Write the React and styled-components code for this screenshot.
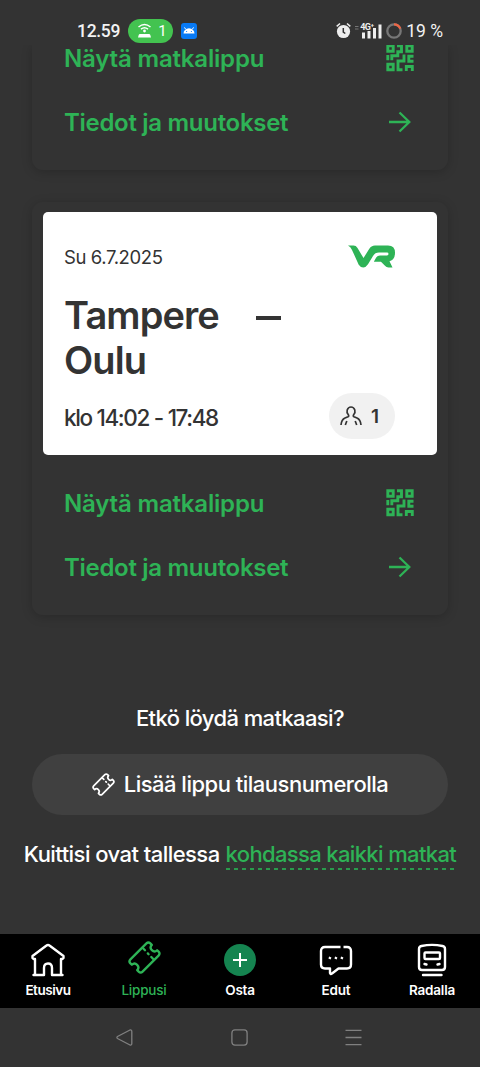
import React from "react";
import styled, { createGlobalStyle } from "styled-components";

const GREEN = "#2eb356";

const GlobalStyle = createGlobalStyle`
  *, *::before, *::after { box-sizing: border-box; }
  html, body { margin: 0; background: #333333; }
  body { font-family: Inter, "Liberation Sans", sans-serif; -webkit-font-smoothing: antialiased; }
`;

const Screen = styled.main`
  width: 480px;
  height: 1067px;
  display: flex;
  flex-direction: column;
  overflow: hidden;
  background: #333333;
  color: #fff;
`;

const StatusBar = styled.header`
  flex: none;
  height: 45px;
  padding: 18px 37px 0 77px;
  display: flex;
  justify-content: space-between;
  background: #333333;
  font-family: Roboto, sans-serif;
  z-index: 1;
`;

const StatusGroup = styled.div`
  display: flex;
  align-items: center;
  height: 25px;
  gap: ${(p) => p.$gap};
`;

const StatusText = styled.span`
  font-size: 17.5px;
  line-height: 25px;
  padding-top: 2px;
  font-weight: ${(p) => p.$weight || 500};
  letter-spacing: ${(p) => p.$track || "0"};
  color: #f2f2f2;
  white-space: nowrap;
`;

const HotspotPill = styled.span`
  display: flex;
  align-items: center;
  gap: 6px;
  width: 45px;
  height: 24px;
  padding-left: 9px;
  border-radius: 12px;
  background: #43c350;
  font-size: 15px;
`;

const Content = styled.section`
  flex: 1;
  min-height: 0;
  overflow: hidden;
  padding: 0 32px;
`;

const Card = styled.article`
  height: ${(p) => p.$height};
  padding: ${(p) => p.$pad};
  margin-bottom: 32px;
  border-radius: ${(p) => (p.$clipped ? "0 0 11px 11px" : "11px")};
  box-shadow: 0 2px 11px rgba(0, 0, 0, 0.2);
  display: flex;
  flex-direction: column;
  justify-content: flex-end;
`;

const Ticket = styled.div`
  flex: none;
  height: 243px;
  padding: 33px 42px 0 21px;
  border-radius: 5px;
  background: #fff;
  color: #333333;
`;

const TicketRow = styled.div`
  display: flex;
  justify-content: space-between;
`;

const TravelDate = styled.span`
  font-size: 18.5px;
  line-height: 25px;
  letter-spacing: -0.4px;
`;

const Route = styled.h2`
  margin: 23px 0 10px;
  font-size: 38px;
  line-height: 45px;
  font-weight: 600;
  letter-spacing: -0.9px;
`;

const RouteStart = styled.div`
  display: flex;
  align-items: center;
  gap: 37px;
`;

const Dash = styled.span`
  width: 25px;
  height: 4px;
  margin-top: 4px;
  background: #333333;
`;

const TravelTime = styled.span`
  font-size: 22.5px;
  line-height: 46px;
  font-weight: 500;
  letter-spacing: -1.4px;
  word-spacing: 0.3px;
  padding-top: 2px;
  height: 46px;
`;

const Passengers = styled.span`
  display: flex;
  align-items: center;
  gap: 9px;
  width: 66px;
  height: 46px;
  padding-left: 11px;
  border-radius: 23px;
  background: #f1f1f1;
  font-size: 19px;
  font-weight: 600;
`;

const Actions = styled.div`
  flex: none;
  padding: ${(p) => p.$pad};
`;

const Action = styled.a`
  display: flex;
  align-items: center;
  justify-content: space-between;
  height: 64px;
  color: ${GREEN};
  font-size: 24px;
  font-weight: 600;
  letter-spacing: ${(p) => p.$track};
`;

const Help = styled.p`
  margin: 0;
  padding-top: 57px;
  line-height: 29px;
  font-size: 22px;
  font-weight: 500;
  letter-spacing: -0.6px;
  text-align: center;
`;

const AddButton = styled.button`
  display: flex;
  align-items: center;
  justify-content: center;
  gap: 9px;
  width: 416px;
  height: 61px;
  margin-top: 21px;
  padding: 0 0 1px;
  border: 0;
  border-radius: 31px;
  background: #404040;
  color: #fff;
  font: 500 22px Inter, sans-serif;
  letter-spacing: -0.5px;
`;

const Receipts = styled.p`
  margin: 25px -20px 0;
  display: flex;
  justify-content: center;
  gap: 6px;
  font-size: 22px;
  line-height: 28px;
  font-weight: 500;
  letter-spacing: -0.55px;
  white-space: nowrap;
`;

const ReceiptLink = styled.a`
  height: 30px;
  letter-spacing: -0.64px;
  color: ${GREEN};
  background: repeating-linear-gradient(90deg, #2a9a4c 0 4px, transparent 4px 8px) bottom / 100% 2px no-repeat;
`;

const TabBar = styled.nav`
  flex: none;
  height: 74px;
  display: grid;
  grid-template-columns: repeat(5, 1fr);
  background: #000;
`;

const Tab = styled.a`
  display: flex;
  flex-direction: column;
  align-items: center;
  padding-top: 8px;
  color: ${(p) => (p.$active ? GREEN : "#fff")};
  font-size: 13.5px;
  line-height: 20px;
  font-weight: ${(p) => (p.$active ? 500 : 600)};
  letter-spacing: ${(p) => p.$track || "-0.2px"};
`;

const TabIcon = styled.span`
  display: flex;
  justify-content: center;
  height: 38px;
  margin-top: ${(p) => (p.$raised ? "-1px" : "0")};
  margin-bottom: ${(p) => (p.$raised ? "1px" : "0")};
`;

const SystemNav = styled.footer`
  flex: none;
  height: 59px;
  display: flex;
  justify-content: center;
  align-items: center;
  gap: 97.500px;
  padding-right: 2px;
`;

const HotspotIcon = () => (
  <svg width="15" height="16" viewBox="0 0 15 16" fill="none" stroke="#fff" strokeWidth="1.5">
    <path d="M1.5 4Q7.5-.8 13.500 4M4 6.200Q7.500 3.400 11 6.200" />
    <circle cx="7.5" cy="8" r="1.4" fill="#fff" stroke="none" />
    <path d="M3 11h9q1 0 1.300 1l.7 2.600H1L1.700 12Q2 11 3 11Z" fill="#fff" stroke="none" />
  </svg>
);

const AndroidIcon = () => (
  <svg width="16" height="16" viewBox="0 0 16 16">
    <rect width="16" height="16" rx="3" fill="#087af5" />
    <path d="M2.500 10.500a5.500 5.300 0 0 1 11 0Z" fill="#fff" />
    <path d="M4.500 6 3.500 4.400M11.500 6l1-1.600" stroke="#fff" />
    <circle cx="5.600" cy="8.500" r=".6" fill="#087af5" />
    <circle cx="10.400" cy="8.500" r=".6" fill="#087af5" />
  </svg>
);

const AlarmIcon = () => (
  <svg width="15" height="17" viewBox="0 0 15 17" fill="none">
    <circle cx="7.500" cy="9.500" r="6.600" fill="#eee" />
    <path d="M.7 4.400 4 1.500M14.300 4.400 11 1.500" stroke="#eee" strokeWidth="1.500" />
    <path d="M7.300 6v4l2 1.500" stroke="#333" strokeWidth="1.500" />
  </svg>
);

const NetworkLabel = styled.span`
  position: absolute;
  top: -1px;
  left: 5px;
  font-size: 9px;
  line-height: 10px;
  font-weight: 700;
  letter-spacing: -0.5px;
  color: #eee;
`;

const Network = styled.span`
  position: relative;
  display: flex;
  width: 27px;
  height: 16px;
`;

const SignalIcon = () => (
  <Network>
    <svg width="27" height="16" viewBox="0 0 27 16">
      <path d="M0 3.500h3.500M0 6h3.500" stroke="#777" strokeWidth="1" />
      <path d="M8.500 9.500v6M14 8v7.500M19.500 5v10.500M25 1.500v14" stroke="#eee" strokeWidth="3" />
    </svg>
    <NetworkLabel>4G⁺</NetworkLabel>
  </Network>
);

const BatteryIcon = () => (
  <svg width="16" height="16" viewBox="0 0 16 16" fill="none" strokeWidth="2.300">
    <circle cx="8" cy="8" r="6.700" stroke="#777" />
    <path d="M8 1.300A6.700 6.700 0 0 1 14.300 5.700" stroke="#ee6746" />
  </svg>
);

const CodeIcon = () => (
  <svg width="28" height="28" viewBox="0 0 28 28" fill="none" stroke="currentColor" strokeWidth="2.900">
    <path d="M1.800 1.800h5.400v5.400H1.800ZM20.800 1.800h5.400v5.400h-5.400ZM1.800 20.300h5.400v5.400H1.800ZM11 1.800h4.500v6h-3.700v3.900H5.800v4.600M1.800 11v5.300M18 10.500V17h-6v8.700h4.500M27.500 12.300h-4.700v5h4.700M20.300 27v-4.500h6V27" />
  </svg>
);

const ArrowIcon = () => (
  <svg width="28" height="24" viewBox="0 0 28 24" fill="none" stroke="currentColor" strokeWidth="2.300">
    <path d="M3 12h20.500M13.500 2.500 23.300 12l-9.800 9.500" />
  </svg>
);

const VrLogo = () => (
  <svg width="47" height="23" viewBox="0 0 47 22" preserveAspectRatio="none">
    <path fill="#2eb356" d="M0 .5H5.500Q8 .5 9.500 2.800L15.500 12.500 21 4Q23.200.5 27 .5H40q7 0 7 7 0 6.500-5.500 8L44.500 21.500H40.500q-2.200 0-3.500-1.700L33 16H25.800l2.400-4q1.300-2 3.800-2h7q1.500 0 1.500-1.400T39 7.200H31q-4 0-6 3.300l-5 8Q18 21.500 15.300 21.500T10.700 18.800L4 4.700Q2.600 1.600 0 .5Z" />
  </svg>
);

const PersonIcon = () => (
  <svg width="22" height="20" viewBox="0 0 22 20" fill="none" stroke="#333" strokeWidth="1.700">
    <path d="M1 19q.5-5.500 4-7l3-1.300q1.300-.7.200-2.200Q6.500 6.500 7.200 4 8.200 1 11 1t3.800 3q.7 2.500-1 4.500-1.100 1.500.2 2.200l3 1.300q3.500 1.500 4 7M6.800 15 5.300 19M15.200 15l1.500 4" />
  </svg>
);

const TicketIcon = ({ size, stroke }) => (
  <svg width={size} height={size} viewBox="0 0 34 34" fill="none" stroke="currentColor" strokeWidth={stroke} strokeLinecap="round" strokeLinejoin="round">
    <path d="M2.500 19 19 2.500q2-2 4 0l1.500 1.500C22.600 6 22.800 7.600 24.600 9.400S28 11.400 30 9.500L31.500 11q2 2 0 4L15 31.500q-2 2-4 0L9.500 30C11.400 28 11.200 26.400 9.400 24.600S6 22.600 4 24.500L2.500 23q-2-2 0-4Z" />
    <path d="m15.500 7.500 2 2M20.400 12.800l.8.800M24 16.500l2 2" />
  </svg>
);

const HomeIcon = () => (
  <svg width="36" height="36" viewBox="0 0 36 36" fill="none" stroke="currentColor" strokeWidth="2.400" strokeLinejoin="round" strokeLinecap="round">
    <path d="M3.500 17 2.500 16v-2L16.500 3.500q1.500-1.200 3 0L33.500 14v2l-1 1H31v16H22V26q0-4.500-4-4.500T14 26v7H5V17ZM3.500 33H14M22 33h10.500" />
  </svg>
);

const AddIcon = () => (
  <svg width="36" height="36" viewBox="0 0 36 36">
    <circle cx="18" cy="18" r="16" fill="#158450" />
    <path d="M18 11v14M11 18h14" stroke="#fff" strokeWidth="2" />
  </svg>
);

const ChatIcon = () => (
  <svg width="36" height="36" viewBox="0 0 36 36" fill="none" stroke="currentColor" strokeWidth="2.400" strokeLinejoin="round">
    <path d="M22.500 5H7Q3 5 3 9v13.500q0 4 4 4h5V31q.5 2 2 .5L20.500 26.500H29q4 0 4-4V9q0-4-4-4h-3.500" />
    <path d="m11.500 17 .8-2M17.500 17l.8-2M23.500 17l.8-2" strokeWidth="2.400" />
  </svg>
);

const TrainIcon = () => (
  <svg width="36" height="36" viewBox="0 0 36 36" fill="none" stroke="currentColor" strokeWidth="2.400" strokeLinecap="round" strokeLinejoin="round">
    <path d="M7.500 4Q18 1.800 28.500 4q2.500.5 2.500 3v18q0 3-3 3H8q-3 0-3-3V7q0-2.500 2.500-3ZM9 33h18.500" />
    <rect x="10.500" y="10.500" width="15.500" height="6.500" rx="1" />
    <path d="m10.500 22 2 .5M25.500 22l-2 .5" />
  </svg>
);

const BackIcon = () => (
  <svg width="17" height="17" viewBox="0 0 17 17" fill="none" stroke="#808080" strokeWidth="1.300" strokeLinejoin="round">
    <path d="M1.500 7.500 14 1q1.800-.5 1.800 1.500v12q0 2-1.800 1.500L1.500 9.500Q.3 8.500 1.500 7.500Z" />
  </svg>
);

const OverviewIcon = () => (
  <svg width="17" height="17" viewBox="0 0 17 17" fill="none" stroke="#808080" strokeWidth="1.300">
    <rect x=".9" y=".9" width="15.200" height="15.200" rx="3" />
  </svg>
);

const MenuIcon = () => (
  <svg width="17" height="17" viewBox="0 0 17 17" stroke="#808080" strokeWidth="1.300">
    <path d="M.5 1.300h16M.5 8.500h16M.5 15.700h16" />
  </svg>
);

const TicketActions = ({ pad }) => (
  <Actions $pad={pad}>
    <Action $track="-0.18px">Näytä matkalippu<CodeIcon /></Action>
    <Action $track="-0.3px">Tiedot ja muutokset<ArrowIcon /></Action>
  </Actions>
);

export default function App() {
  return (
    <Screen>
      <GlobalStyle />
      <StatusBar>
        <StatusGroup $gap="8px">
          <StatusText $track="-0.3px">12.59</StatusText>
          <HotspotPill><HotspotIcon />1</HotspotPill>
          <AndroidIcon />
        </StatusGroup>
        <StatusGroup $gap="4px">
          <AlarmIcon />
          <SignalIcon />
          <BatteryIcon />
          <StatusText $weight={400}>19 %</StatusText>
        </StatusGroup>
      </StatusBar>
      <Content>
        <Card $clipped $height="125px" $pad="0">
          <TicketActions pad="0 34px 16px 32px" />
        </Card>
        <Card $height="413px" $pad="10px 11px 0">
          <Ticket>
            <TicketRow>
              <TravelDate>Su 6.7.2025</TravelDate>
              <VrLogo />
            </TicketRow>
            <Route>
              <RouteStart>Tampere<Dash /></RouteStart>
              Oulu
            </Route>
            <TicketRow>
              <TravelTime>klo 14:02 - 17:48</TravelTime>
              <Passengers><PersonIcon />1</Passengers>
            </TicketRow>
          </Ticket>
          <TicketActions pad="16px 23px 16px 21px" />
        </Card>
        <Help>Etkö löydä matkaasi?</Help>
        <AddButton><TicketIcon size={23} stroke={2.5} />Lisää lippu tilausnumerolla</AddButton>
        <Receipts>
          <span>Kuittisi ovat tallessa</span>
          <ReceiptLink>kohdassa kaikki matkat</ReceiptLink>
        </Receipts>
      </Content>
      <TabBar>
        <Tab $track="-0.45px"><TabIcon><HomeIcon /></TabIcon>Etusivu</Tab>
        <Tab $active $track="-0.2px"><TabIcon $raised><TicketIcon size={33} stroke={2.4} /></TabIcon>Lippusi</Tab>
        <Tab><TabIcon><AddIcon /></TabIcon>Osta</Tab>
        <Tab><TabIcon><ChatIcon /></TabIcon>Edut</Tab>
        <Tab><TabIcon><TrainIcon /></TabIcon>Radalla</Tab>
      </TabBar>
      <SystemNav>
        <BackIcon />
        <OverviewIcon />
        <MenuIcon />
      </SystemNav>
    </Screen>
  );
}
